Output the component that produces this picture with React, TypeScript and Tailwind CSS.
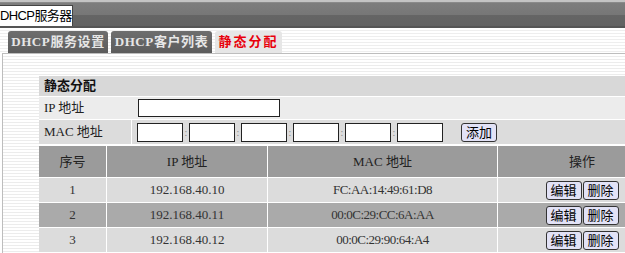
import React from "react";

const serif = "font-['SimSun','Liberation_Serif','Noto_Sans_CJK_SC',serif]";

function MacInput() {
  return <input className="w-[46px] h-[19px] border border-[#222] bg-white box-border" />;
}

export default function App() {
  const rows = [
    ["1", "192.168.40.10", "FC:AA:14:49:61:D8"],
    ["2", "192.168.40.11", "00:0C:29:CC:6A:AA"],
    ["3", "192.168.40.12", "00:0C:29:90:64:A4"],
  ];
  return (
    <div className="w-[625px] h-[253px] overflow-hidden bg-white relative font-['Liberation_Sans','Noto_Sans_CJK_SC',sans-serif]">
      {/* top bar */}
      <div className="h-[28px] flex flex-col">
        <div className="h-[2px] bg-[#c4c4c4]" />
        <div className="h-[1px] bg-[#8a8a8a]" />
        <div className="flex-1 flex bg-[linear-gradient(to_bottom,#7d7d7d_0%,#777_50%,#656565_52%,#626262_100%)] border-b-2 border-[#555]">
          <div className="mt-[2px] w-[73px] whitespace-nowrap overflow-hidden bg-white border-t border-r border-[#444] text-[13px] leading-[20px] text-black tracking-[-0.6px]">
            DHCP服务器
          </div>
        </div>
      </div>
      {/* sub tabs */}
      <div className="h-[25px] flex items-end pl-[8px] gap-[3px] bg-[repeating-linear-gradient(to_bottom,#fff_0px,#fff_2px,#eeeeee_2px,#eeeeee_3px)]">
        <div className={`w-[100px] whitespace-nowrap h-[22px] text-center rounded-t-[3px] bg-[linear-gradient(to_bottom,#6e6e6e,#5c5c5c)] text-[#e6e6e6] font-bold text-[13px] leading-[22px] tracking-[0.6px] ${serif}`}>
          DHCP服务设置
        </div>
        <div className={`w-[101px] whitespace-nowrap h-[22px] text-center rounded-t-[3px] bg-[linear-gradient(to_bottom,#6e6e6e,#5c5c5c)] text-[#e6e6e6] font-bold text-[13px] leading-[22px] tracking-[0.6px] ${serif}`}>
          DHCP客户列表
        </div>
        <div className={`w-[67px] whitespace-nowrap h-[22px] text-center rounded-t-[3px] bg-[#e6e6e6] text-[#e8000b] font-bold text-[13px] leading-[22px] tracking-[2px] ${serif}`}>
          静态分配
        </div>
      </div>
      {/* content */}
      <div className="ml-[2px] border-l border-t border-[#bdbdbd] h-[200px] pt-[22px] pl-[36px] bg-[repeating-linear-gradient(to_bottom,#fff_0px,#fff_2px,#ececec_2px,#ececec_3px)]">
        <div className={`w-[627px] text-[13px] text-[#222] ${serif}`}>
          <div className="h-[20px] bg-[#d8d8d8] font-bold pl-[5px] leading-[20px] text-[#111]">静态分配</div>
          <div className="h-[1px] bg-white" />
          <div className="h-[22px] bg-[#ececec] flex items-center">
            <div className="w-[93px] pl-[5px]">IP 地址</div>
            <div className="pl-[6px]">
              <input className="w-[142px] h-[18px] border border-[#222] bg-white box-border block" />
            </div>
          </div>
          <div className="h-[1px] bg-white" />
          <div className="h-[24px] bg-[#dcdcdc] flex items-center">
            <div className="w-[93px] pl-[5px] h-full leading-[24px] border-r border-white">MAC 地址</div>
            <div className="pl-[5px] flex items-center">
              <MacInput />
              <span className="w-[6px] text-center text-[10px] text-[#888]">:</span>
              <MacInput />
              <span className="w-[6px] text-center text-[10px] text-[#888]">:</span>
              <MacInput />
              <span className="w-[6px] text-center text-[10px] text-[#888]">:</span>
              <MacInput />
              <span className="w-[6px] text-center text-[10px] text-[#888]">:</span>
              <MacInput />
              <span className="w-[6px] text-center text-[10px] text-[#888]">:</span>
              <MacInput />
              <button className="ml-[18px] w-[36px] h-[19px] rounded-[3px] border border-[#333] bg-[#e2e2f6] text-[13px] leading-[17px] text-black">
                添加
              </button>
            </div>
          </div>
          <div className="h-[2px] bg-white" />
          <div className="flex h-[31px] bg-[#9b9b9b] leading-[31px] text-[#222]">
            <div className="w-[68px] text-center border-r border-white">序号</div>
            <div className="w-[161px] text-center border-r border-white">IP 地址</div>
            <div className="w-[230px] text-center border-r border-white">MAC 地址</div>
            <div className="flex-1 text-center">操作</div>
          </div>
          {rows.map((r, i) => (
            <React.Fragment key={r[0]}>
              <div className="h-[1px] bg-white" />
              <div className={`flex h-[24px] leading-[24px] text-[#333] ${i % 2 === 0 ? "bg-[#dcdcdc]" : "bg-[#aaaaaa]"}`}>
                <div className="w-[68px] text-center border-r border-white">{r[0]}</div>
                <div className="w-[161px] text-center border-r border-white">{r[1]}</div>
                <div className="w-[230px] text-center border-r border-white tracking-[-0.5px]">{r[2]}</div>
                <div className="flex-1 flex items-center justify-center gap-[1px]">
                  <button className="w-[36px] h-[19px] rounded-[3px] border border-[#333] bg-[#e2e2f6] text-[13px] leading-[17px] text-black">编辑</button>
                  <button className="w-[36px] h-[19px] rounded-[3px] border border-[#333] bg-[#e2e2f6] text-[13px] leading-[17px] text-black">删除</button>
                </div>
              </div>
            </React.Fragment>
          ))}
        </div>
      </div>
    </div>
  );
}
